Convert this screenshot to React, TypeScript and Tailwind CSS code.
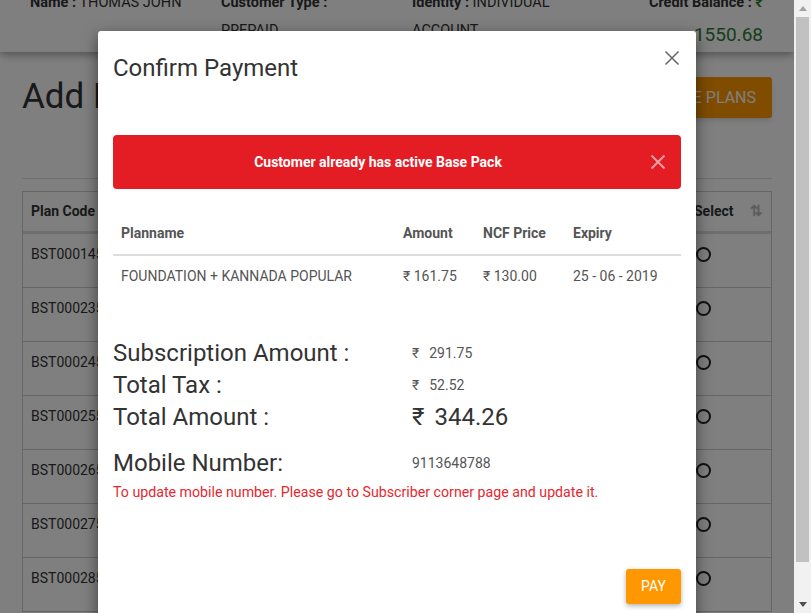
import React from "react";

const rows = ["BST00014", "BST00023", "BST00024", "BST00025", "BST00026", "BST00027", "BST00028"];

function Page() {
  return (
    <div className="w-[794px] h-[613px] bg-white overflow-hidden">
      {/* header card */}
      <div className="-mt-[21px] h-[73px] bg-white shadow-[0_3px_8px_rgba(0,0,0,0.35)] flex px-[30px] pt-[10px] text-[14.5px] leading-[28px] text-[#333]">
        <div className="w-[191px]">
          <span className="font-bold">Name :</span> THOMAS JOHN
        </div>
        <div className="w-[191px] pr-[60px]">
          <span className="font-bold">Customer Type :</span> PREPAID
        </div>
        <div className="w-[175px]">
          <span className="font-bold">Identity :</span> INDIVIDUAL ACCOUNT
        </div>
        <div className="flex-1 text-right pr-[1px]">
          <div className="font-bold">Credit Balance : <span className="text-[#2e7d32]">₹</span></div>
          <div className="text-[19px] leading-[36px] text-[#2e7d32]">1550.68</div>
        </div>
      </div>

      <div className="px-[22px]">
        <div className="mt-[25px] h-[41px] flex items-center justify-between">
          <h1 className="text-[35px] text-[#333] font-normal">Add Base Plans</h1>
          <button className="h-[41px] px-[16px] bg-[#ff9800] text-white text-[16px] rounded-[3px] shadow-md">ACTIVE PLANS</button>
        </div>
        <div className="mt-[60px] border-t border-[#ddd]" />
        <div className="mt-[12px] border border-[#ccc] border-b-0">
          <div className="h-[42px] flex items-center border-b-[3px] border-[#ddd] text-[14px] font-bold text-[#333]">
            <div className="w-[120px] pl-[8px]">Plan Code</div>
            <div className="flex-1" />
            <div className="w-[85px] pl-[8px] flex items-center justify-between pr-[8px]">
              <span>Select</span>
              <span className="text-[#bbb] text-[15px]">⇅</span>
            </div>
          </div>
          {rows.map((r) => (
            <div key={r} className="h-[54px] flex border-b border-[#ccc] text-[14px] text-[#333]">
              <div className="w-[120px] pl-[8px] pt-[10px]">{r}5</div>
              <div className="flex-1" />
              <div className="w-[85px] pl-[10px] pt-[13px]">
                <div className="w-[15px] h-[15px] rounded-full border-2 border-[#222]" />
              </div>
            </div>
          ))}
        </div>
      </div>
    </div>
  );
}

function Modal() {
  return (
    <div className="absolute left-[98px] top-[31px] w-[598px] h-[620px] bg-white rounded-[3px] shadow-[0_5px_15px_rgba(0,0,0,0.5)]">
      <div className="px-[15px] pt-[23px]">
        <h2 className="text-[24px] leading-[28px] text-[#333] font-normal">Confirm Payment</h2>
      </div>
      <button className="absolute left-[566px] top-[19px]">
        <svg width="16" height="16" viewBox="0 0 16 16">
          <path d="M1.5 1.5 L14.5 14.5 M14.5 1.5 L1.5 14.5" stroke="#666" strokeWidth="1.5" fill="none" />
        </svg>
      </button>

      <div className="mx-[15px] mt-[53px] h-[54px] bg-[#e41c24] rounded-[4px] flex items-center">
        <div className="flex-1 text-center text-white font-bold text-[14px]">Customer already has active Base Pack</div>
        <div className="w-[38px] flex items-center">
          <svg width="16" height="16" viewBox="0 0 16 16" className="ml-[7px]">
            <path d="M1.5 1.5 L14.5 14.5 M14.5 1.5 L1.5 14.5" stroke="#f3a0a3" strokeWidth="2" fill="none" />
          </svg>
        </div>
      </div>

      <div className="mx-[15px] mt-[23px] text-[14px] text-[#555]">
        <div className="h-[44px] flex items-center border-b-2 border-[#ddd] font-bold">
          <div className="w-[282px] pl-[8px]">Planname</div>
          <div className="w-[80px] pl-[8px]">Amount</div>
          <div className="w-[90px] pl-[8px]">NCF Price</div>
          <div className="flex-1 pl-[8px]">Expiry</div>
        </div>
        <div className="h-[40px] flex items-center">
          <div className="w-[282px] pl-[8px]">FOUNDATION + KANNADA POPULAR</div>
          <div className="w-[80px] pl-[8px]">₹ 161.75</div>
          <div className="w-[90px] pl-[8px]">₹ 130.00</div>
          <div className="flex-1 pl-[8px]">25 - 06 - 2019</div>
        </div>
      </div>

      <div className="px-[15px] mt-[41px]">
        <div className="h-[32px] flex items-center">
          <div className="w-[299px] text-[24px] text-[#333]">Subscription Amount :</div>
          <div className="text-[14px] text-[#555]">₹<span className="ml-[10px]">291.75</span></div>
        </div>
        <div className="h-[32px] flex items-center">
          <div className="w-[299px] text-[24px] text-[#333]">Total Tax :</div>
          <div className="text-[14px] text-[#555]">₹<span className="ml-[10px]">52.52</span></div>
        </div>
        <div className="h-[32px] flex items-center">
          <div className="w-[299px] text-[24px] text-[#333]">Total Amount :</div>
          <div className="text-[24px] text-[#333]">₹<span className="ml-[10px]">344.26</span></div>
        </div>
        <div className="mt-[14px] h-[32px] flex items-center">
          <div className="w-[299px] text-[24px] text-[#333]">Mobile Number:</div>
          <div className="text-[14px] text-[#555]">9113648788</div>
        </div>
        <p className="mt-[3px] text-[14.2px] leading-[20px] text-[#e5282f]">
          To update mobile number. Please go to Subscriber corner page and update it.
        </p>
        <div className="mt-[67px] flex justify-end">
          <button className="w-[55px] h-[35px] bg-[#ff9800] text-white text-[14px] rounded-[3px] shadow-[0_2px_5px_rgba(0,0,0,0.3)]">PAY</button>
        </div>
      </div>
    </div>
  );
}

function Scrollbar() {
  return (
    <div className="w-[17px] h-[613px] bg-[#f1f1f1] flex flex-col">
      <div className="h-[17px] flex items-center justify-center">
        <svg width="8" height="5" viewBox="0 0 8 5"><path d="M4 0 L8 5 L0 5 Z" fill="#a3a3a3" /></svg>
      </div>
      <div className="ml-[2px] w-[13px] h-[545px] bg-[#c1c1c1]" />
      <div className="flex-1" />
      <div className="h-[17px] flex items-center justify-center">
        <svg width="8" height="5" viewBox="0 0 8 5"><path d="M0 0 L8 0 L4 5 Z" fill="#505050" /></svg>
      </div>
    </div>
  );
}

export default function App() {
  return (
    <div className="w-[811px] h-[613px] flex overflow-hidden [font-family:Roboto,'Liberation_Sans',sans-serif]">
      <div className="relative w-[794px] h-[613px] overflow-hidden">
        <Page />
        <div className="absolute inset-0 bg-black/50" />
        <Modal />
      </div>
      <Scrollbar />
    </div>
  );
}
